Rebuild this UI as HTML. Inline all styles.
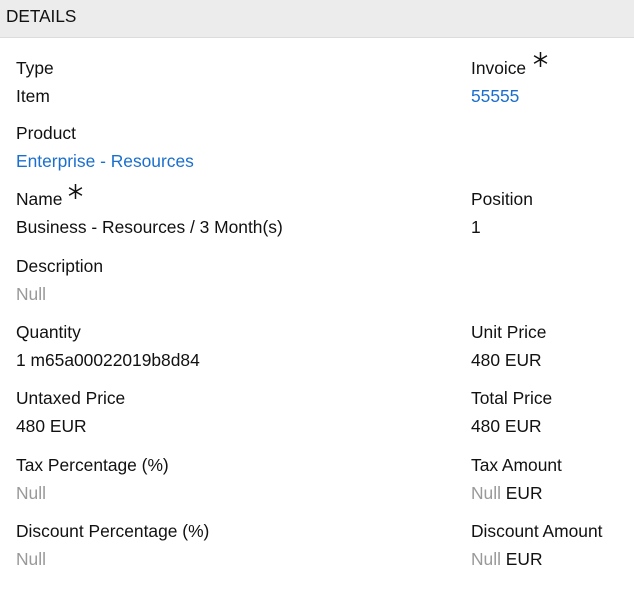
<!DOCTYPE html>
<html><head><style>
body{margin:0;width:634px;height:613px;background:#fff;font-family:"Liberation Sans",sans-serif;font-size:17.4px;color:#111;position:relative;overflow:hidden}
.hd{position:absolute;left:0;top:0;width:634px;height:37px;background:#ececec;border-bottom:1px solid #dcdcdc}
.hd span{position:absolute;left:6px;top:6px;font-size:17.2px;line-height:20px}
.t{position:absolute;line-height:20px;white-space:nowrap}
.b{color:#1a6fce}.n{color:#999}
svg{position:absolute}
</style></head><body>
<div class="hd"><span>DETAILS</span></div>
<div class="t" style="left:16px;top:58px">Type</div>
<div class="t" style="left:16px;top:86px">Item</div>
<div class="t" style="left:471px;top:58px">Invoice</div>
<svg style="left:533px;top:52px" width="15" height="15" viewBox="0 0 14 14" stroke="#111" stroke-width="1.4"><path d="M7 0V14M1 3.5L13 10.5M1 10.5L13 3.5"/></svg>
<div class="t b" style="left:471px;top:86px">55555</div>
<div class="t" style="left:16px;top:123px">Product</div>
<div class="t b" style="left:16px;top:151px">Enterprise - Resources</div>
<div class="t" style="left:16px;top:189px">Name</div>
<svg style="left:68px;top:184px" width="15" height="15" viewBox="0 0 14 14" stroke="#111" stroke-width="1.4"><path d="M7 0V14M1 3.5L13 10.5M1 10.5L13 3.5"/></svg>
<div class="t" style="left:16px;top:217px">Business - Resources / 3 Month(s)</div>
<div class="t" style="left:471px;top:189px">Position</div>
<div class="t" style="left:471px;top:217px">1</div>
<div class="t" style="left:16px;top:256px">Description</div>
<div class="t n" style="left:16px;top:284px">Null</div>
<div class="t" style="left:16px;top:322px">Quantity</div>
<div class="t" style="left:16px;top:350px">1 m65a00022019b8d84</div>
<div class="t" style="left:471px;top:322px">Unit Price</div>
<div class="t" style="left:471px;top:350px">480 EUR</div>
<div class="t" style="left:16px;top:388px">Untaxed Price</div>
<div class="t" style="left:16px;top:416px">480 EUR</div>
<div class="t" style="left:471px;top:388px">Total Price</div>
<div class="t" style="left:471px;top:416px">480 EUR</div>
<div class="t" style="left:16px;top:455px">Tax Percentage (%)</div>
<div class="t n" style="left:16px;top:483px">Null</div>
<div class="t" style="left:471px;top:455px">Tax Amount</div>
<div class="t" style="left:471px;top:483px"><span class="n">Null</span> EUR</div>
<div class="t" style="left:16px;top:521px">Discount Percentage (%)</div>
<div class="t n" style="left:16px;top:549px">Null</div>
<div class="t" style="left:471px;top:521px">Discount Amount</div>
<div class="t" style="left:471px;top:549px"><span class="n">Null</span> EUR</div>
</body></html>
